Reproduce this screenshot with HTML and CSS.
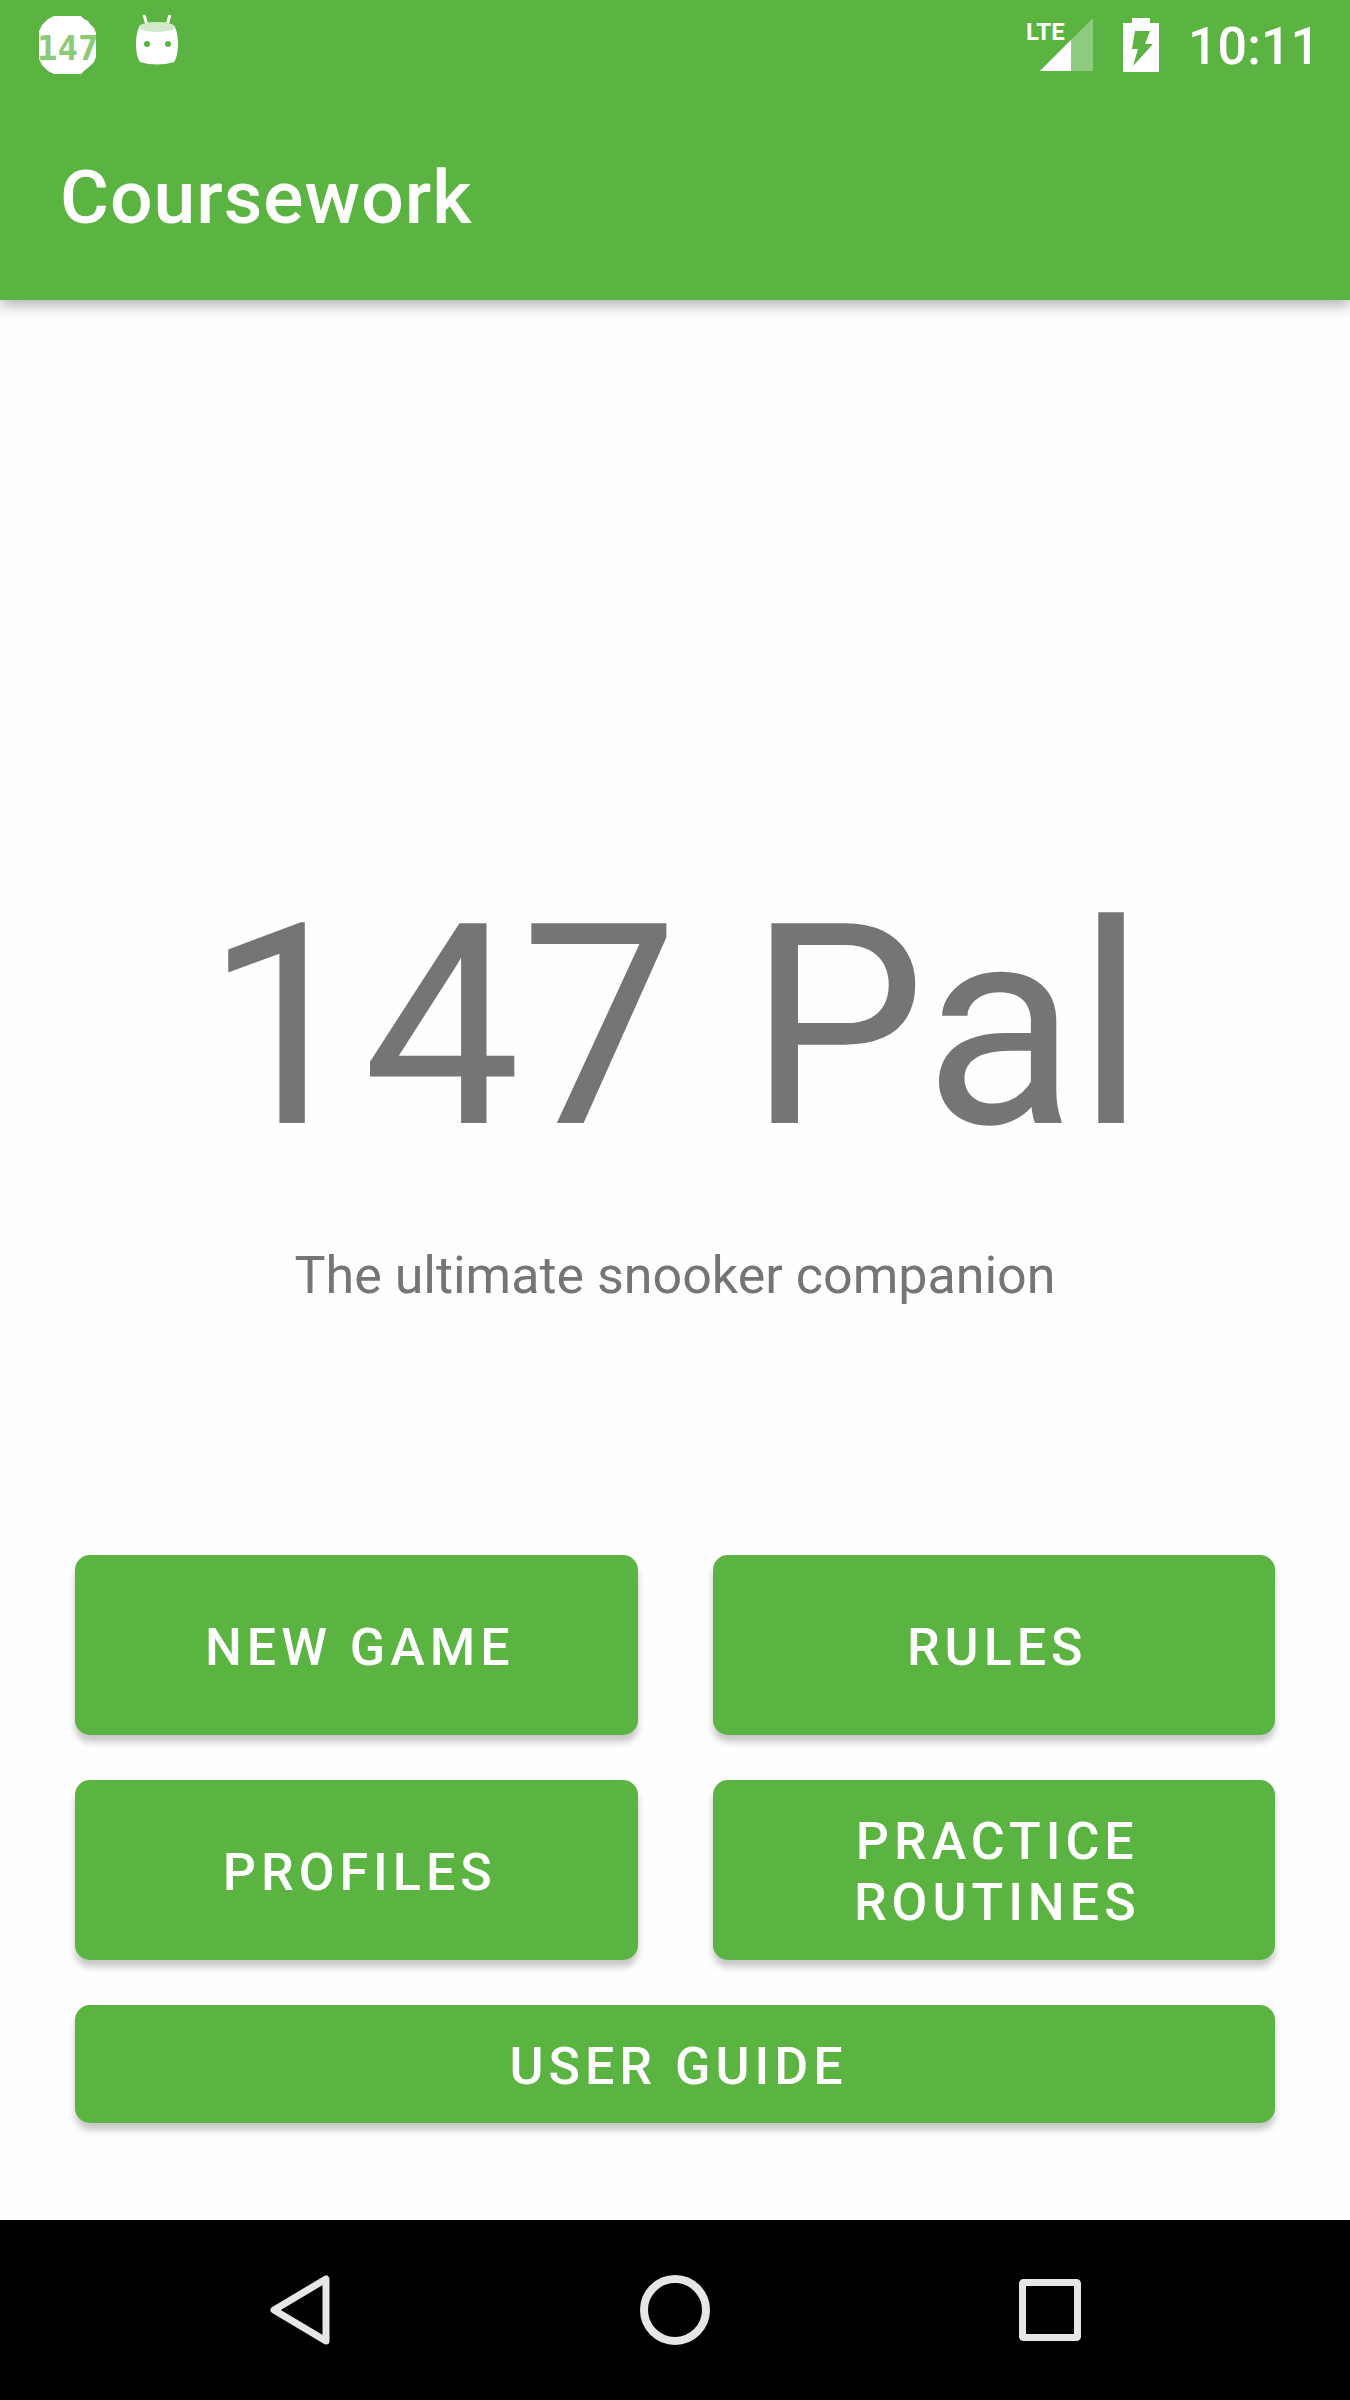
FILE: index.html
```html
<!DOCTYPE html>
<html lang="en">
<head>
<meta charset="utf-8">
<meta name="viewport" content="width=device-width, initial-scale=1">
<title>Coursework</title>
<link rel="stylesheet" href="styles.css">
</head>
<body>
<div class="top">
  <div class="status">
    <div class="status-group notifications">
      <svg width="60" height="60" viewBox="0 0 60 60" role="img" aria-label="147 Pal notification">
        <clipPath id="ball"><path d="M16 1H43L52 7L58 15V45L52 52L43 59H16L8 52L1 44V16L8 7Z"/></clipPath>
        <path fill="#fff" d="M16 1H43L46 4L50 6L52 9L56 13L58 18V42L56 47L52 51L46 56L43 59H16L10 56L4 50L1 44V16L4 10L10 4Z"/>
        <g clip-path="url(#ball)"><text class="ball-number" x="-1" y="45">147</text></g>
      </svg>
      <svg width="44" height="54" viewBox="0 0 44 54" aria-hidden="true">
        <path d="M9 1L13 14M35 1L31 14" stroke="#fff" stroke-width="3" fill="none"/>
        <path fill="#fff" d="M4 13Q22 5 40 13Q43 20 43 30Q43 42 39 48Q22 53 5 48Q1 42 1 30Q1 20 4 13Z"/>
        <ellipse cx="22" cy="13" rx="18" ry="5" fill="#d1eac8"/>
        <circle cx="12" cy="30" r="3" fill="#5bb342"/><circle cx="33" cy="30" r="3" fill="#5bb342"/>
      </svg>
    </div>
    <div class="status-group system">
      <svg width="68" height="54" viewBox="0 0 68 54" role="img" aria-label="LTE signal">
        <path d="M14 53L67 0V53Z" fill="#8fcb7e"/>
        <path d="M14 53L45 22V53Z" fill="#fff"/>
        <text class="lte" x="0" y="22">LTE</text>
      </svg>
      <svg width="36" height="54" viewBox="0 0 36 54" aria-hidden="true">
        <path fill="#fff" fill-rule="evenodd" d="M9 0H27V5H36V54H0V5H9ZM12 13H27L22 26H30L10 48L15 31H9Z"/>
      </svg>
      <span class="clock">10:11</span>
    </div>
  </div>
  <header class="app-bar"><h1 class="app-title">Coursework</h1></header>
</div>
<main class="main">
  <section class="hero">
    <h2 class="name">147 Pal</h2>
    <p class="tagline">The ultimate snooker companion</p>
  </section>
  <div class="actions">
    <button class="action" type="button">NEW GAME</button>
    <button class="action" type="button">RULES</button>
    <button class="action" type="button">PROFILES</button>
    <button class="action" type="button">PRACTICE ROUTINES</button>
    <button class="action wide" type="button">USER GUIDE</button>
  </div>
</main>
<nav class="nav" aria-label="System navigation">
  <button class="nav-button" type="button" aria-label="Back">
    <svg width="70" height="70" viewBox="0 0 70 70"><path d="M9 35L61 4V66Z" fill="none" stroke="#e6e6e6" stroke-width="7" stroke-linejoin="round"/></svg>
  </button>
  <button class="nav-button" type="button" aria-label="Home">
    <svg width="70" height="70" viewBox="0 0 70 70"><circle cx="35" cy="35" r="31" fill="none" stroke="#e6e6e6" stroke-width="8"/></svg>
  </button>
  <button class="nav-button" type="button" aria-label="Recent apps">
    <svg width="70" height="70" viewBox="0 0 70 70"><rect x="7.5" y="7.5" width="55" height="55" rx="1" fill="none" stroke="#e6e6e6" stroke-width="7" stroke-linejoin="round"/></svg>
  </button>
</nav>
</body>
</html>
```
FILE: styles.css
```css
* {
  box-sizing: border-box;
}

body {
  display: flex;
  flex-direction: column;
  min-height: 100vh;
  margin: 0;
  background: #fefefe;
  color: #757575;
  font-family: Roboto, "Liberation Sans", sans-serif;
}

svg {
  display: block;
  flex: none;
}

.top {
  background: #5bb342;
  color: #fff;
  box-shadow: 0 5px 14px rgba(0, 0, 0, 0.32);
}

.status {
  display: flex;
  justify-content: space-between;
  height: 90px;
  padding: 0 30px 0 38px;
}

.status-group {
  display: flex;
  align-items: center;
}

.notifications {
  gap: 37px;
}

.notifications svg:last-child {
  margin-bottom: 8px;
}

.system {
  gap: 29px;
}

.ball-number {
  fill: #8bca79;
  font: bold 34px "DejaVu Sans Mono", monospace;
}

.lte {
  fill: #fff;
  font: bold 24px Roboto, "Liberation Sans", sans-serif;
}

.clock {
  padding-top: 4px;
  font-size: 52px;
  font-weight: 500;
  line-height: 60px;
}

.app-bar {
  display: flex;
  align-items: center;
  height: 210px;
  padding: 4px 60px 0;
}

.app-title {
  margin: 0;
  font-size: 75px;
  font-weight: 500;
  line-height: 88px;
  letter-spacing: 1px;
}

.main {
  display: flex;
  flex: 1;
  flex-direction: column;
  padding: 0 75px 97px;
}

.hero {
  display: flex;
  flex: 1;
  flex-direction: column;
  justify-content: flex-end;
  gap: 53px;
  padding-bottom: 248px;
  text-align: center;
}

.name {
  margin: 0;
  font-size: 281px;
  font-weight: 400;
  line-height: 329px;
}

.tagline {
  margin: 0;
  font-size: 52px;
  line-height: 62px;
}

.actions {
  display: grid;
  grid-template-columns: 1fr 1fr;
  gap: 45px 75px;
}

.action {
  min-height: 180px;
  padding: 4px 56px 0 63px;
  border: 0;
  border-radius: 15px;
  background: #5bb342;
  box-shadow: 0 7px 7px rgba(0, 0, 0, 0.22);
  color: #fff;
  font: 500 52px/61px Roboto, "Liberation Sans", sans-serif;
  letter-spacing: 5px;
}

.wide {
  grid-column: 1 / -1;
  min-height: 118px;
}

.nav {
  display: flex;
  height: 180px;
  padding: 0 112px;
  background: #000;
}

.nav-button {
  display: flex;
  flex: 1;
  align-items: center;
  justify-content: center;
  padding: 0;
  border: 0;
  background: none;
}
```
